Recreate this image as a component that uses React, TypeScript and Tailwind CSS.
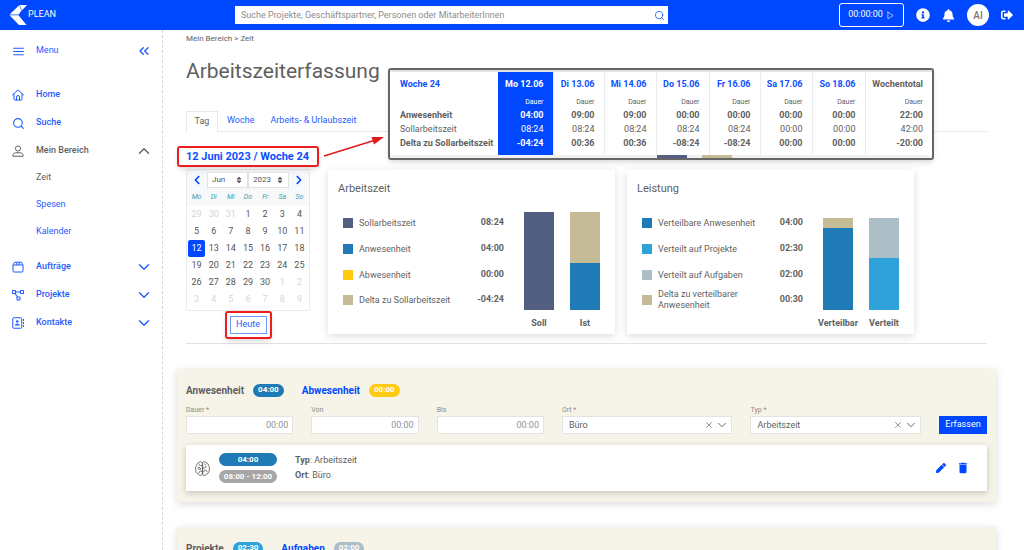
import React, { useState } from 'react'
import { FaBell, FaChevronLeft, FaChevronRight, FaInfoCircle, FaPen, FaSignOutAlt, FaSort } from 'react-icons/fa'
import { MdDelete } from 'react-icons/md'
import { FiChevronDown, FiChevronUp, FiChevronsLeft, FiMenu, FiPlay, FiSearch, FiX } from 'react-icons/fi'

type LegendItem = {
  label: string,
  value: string,
  color: string,
}

type Bar = {
  label: string,
  height: string,
  parts: { color: string, share: number }[],
}

const week = [
  { day: 'Mo 12.06', ist: '04:00', soll: '08:24', delta: '-04:24' },
  { day: 'Di 13.06', ist: '09:00', soll: '08:24', delta: '00:36' },
  { day: 'Mi 14.06', ist: '09:00', soll: '08:24', delta: '00:36' },
  { day: 'Do 15.06', ist: '00:00', soll: '08:24', delta: '-08:24' },
  { day: 'Fr 16.06', ist: '00:00', soll: '08:24', delta: '-08:24' },
  { day: 'Sa 17.06', ist: '00:00', soll: '00:00', delta: '00:00' },
  { day: 'So 18.06', ist: '00:00', soll: '00:00', delta: '00:00' },
  { day: 'Wochentotal', ist: '22:00', soll: '42:00', delta: '-20:00' },
]

const arbeitszeit: LegendItem[] = [
  { label: 'Sollarbeitszeit', value: '08:24', color: 'bg-[#535f80]' },
  { label: 'Anwesenheit', value: '04:00', color: 'bg-[#207ab5]' },
  { label: 'Abwesenheit', value: '00:00', color: 'bg-[#ffca10]' },
  { label: 'Delta zu Sollarbeitszeit', value: '-04:24', color: 'bg-[#c6bb97]' },
]

const arbeitszeitBars: Bar[] = [
  { label: 'Soll', height: 'h-[98px]', parts: [{ color: 'bg-[#535f80]', share: 100 }] },
  { label: 'Ist', height: 'h-[98px]', parts: [{ color: 'bg-[#c6bb97]', share: 52 }, { color: 'bg-[#207ab5]', share: 48 }] },
]

const leistung: LegendItem[] = [
  { label: 'Verteilbare Anwesenheit', value: '04:00', color: 'bg-[#207ab5]' },
  { label: 'Verteilt auf Projekte', value: '02:30', color: 'bg-[#2fa2d9]' },
  { label: 'Verteilt auf Aufgaben', value: '02:00', color: 'bg-[#acbec6]' },
  { label: 'Delta zu verteilbarer Anwesenheit', value: '00:30', color: 'bg-[#c6bb97]' },
]

const leistungBars: Bar[] = [
  { label: 'Verteilbar', height: 'h-[92px]', parts: [{ color: 'bg-[#c6bb97]', share: 11 }, { color: 'bg-[#207ab5]', share: 89 }] },
  { label: 'Verteilt', height: 'h-[92px]', parts: [{ color: 'bg-[#acbec6]', share: 44 }, { color: 'bg-[#2fa2d9]', share: 56 }] },
]

// 29 May to 9 July
const days = Array.from({ length: 42 }, (_, i) => {
  if (i < 3) return { day: 29 + i, outside: true }
  if (i < 33) return { day: i - 2, outside: false }
  return { day: i - 32, outside: true }
})

function Logo() {
  return (
    <svg viewBox="0 0 19 20" className="h-5 w-[19px]" fill="#fff">
      <path d="M10.5 0 H18 L11 7.5 L10 9.5 H0.5 Z" />
      <path d="M10.5 0 L13 6" stroke="#0048ff" strokeWidth="0.6" />
      <path d="M0.5 10.3 H9.5 L17.5 20 H10 Z" />
    </svg>
  )
}

function HomeIcon() {
  return (
    <svg viewBox="0 0 24 24" className="h-3 w-3" fill="none" stroke="currentColor" strokeWidth="2" strokeLinejoin="round" strokeLinecap="round">
      <path d="M1 12 L10.3 3.2 a2.5 2.5 0 0 1 3.4 0 L23 12" />
      <path d="M4 10 V20 a2 2 0 0 0 2 2 H18 a2 2 0 0 0 2 -2 V10" />
      <path d="M9 22 V16 a3 3 0 0 1 6 0 V22" />
    </svg>
  )
}

function PersonIcon() {
  return (
    <svg viewBox="0 0 24 24" className="h-3 w-3" fill="none" stroke="currentColor" strokeWidth="2" strokeLinejoin="round">
      <circle cx="12" cy="7" r="5.2" />
      <path d="M2 22.5 V20 C2 17.5 4 16 7 15.5 H17 C20 16 22 17.5 22 20 V22.5 Z" />
    </svg>
  )
}

function BoxIcon() {
  return (
    <svg viewBox="0 0 24 24" className="h-3 w-3" fill="none" stroke="currentColor" strokeWidth="2" strokeLinejoin="round">
      <path d="M2 8 L5 2.5 H19 L22 8 V20 a2 2 0 0 1 -2 2 H4 a2 2 0 0 1 -2 -2 Z M2 8 H22 M9.5 2.5 V8 M14.5 2.5 V8" />
    </svg>
  )
}

function FlowIcon() {
  return (
    <svg viewBox="0 0 24 24" className="h-3 w-3" fill="none" stroke="currentColor" strokeWidth="2.2" strokeLinejoin="round">
      <rect x="1" y="3" width="6" height="6" rx="1" />
      <rect x="17" y="3" width="6" height="6" rx="1" />
      <rect x="10" y="16" width="6" height="6" rx="1" />
      <path d="M7 6 H17 M6 9 L11 16" />
    </svg>
  )
}

function ContactIcon() {
  return (
    <svg viewBox="0 0 24 24" className="h-3 w-3" fill="none" stroke="currentColor" strokeWidth="2">
      <rect x="1.5" y="1.5" width="18" height="21" rx="2" />
      <circle cx="10.5" cy="9" r="2.6" fill="currentColor" stroke="none" />
      <path d="M5.5 17 C5.5 12 15.5 12 15.5 17 Z" fill="currentColor" stroke="none" />
      <path d="M23 4 V8 M23 10 V14 M23 16 V20" />
    </svg>
  )
}

function BrainIcon() {
  return (
    <svg viewBox="0 0 30 30" className="h-[15px] w-[15px]" fill="none" stroke="currentColor" strokeWidth="1.8" strokeLinecap="round" strokeLinejoin="round">
      <path d="M15 4 C13.5 0 8 0.5 7.5 4 C4 4 2.5 7 3.5 9.5 C0.5 11.5 0 16 2 18 C0.5 21.5 3 25 6 25 C7 29.5 13 30 15 26.5 Z" />
      <path d="M15 4 C16.5 0 22 0.5 22.5 4 C26 4 27.5 7 26.5 9.5 C29.5 11.5 30 16 28 18 C29.5 21.5 27 25 24 25 C23 29.5 17 30 15 26.5 Z" />
      <path d="M15 9 H11 C9.5 9 8.5 8 8.5 6.5 M7 13 C9.5 12 11.5 13.5 11 16 M11 16 C9 17.5 6.5 17 5.5 15.5 M15 20.5 H11 C9 20.5 8 22 8.5 23.5" />
      <path d="M15 14 H19 C21 14 22 12.5 21.5 10.5 M19.5 6 L21 8 M15 22 C18 22 19 20.5 19 18.5 C21 18 23.5 18.5 24 21" />
    </svg>
  )
}

function Header() {
  return (
    <header className="flex h-[30px] shrink-0 items-center bg-[#0048ff] pr-[11px] pl-[9px] text-white">
      <a href="#" className="flex w-[226px] items-center text-[9px]">
        <Logo />
        PLEAN
      </a>

      <form className="flex h-[18px] w-[433px] items-center bg-white pr-[3px]">
        <input
          type="text"
          aria-label="Suche"
          placeholder="Suche Projekte, Geschäftspartner, Personen oder MitarbeiterInnen"
          className="h-full min-w-0 flex-1 px-[6px] text-[9px] text-[#555] outline-none placeholder:text-[#8d8d8d]"
        />
        <button type="button" aria-label="Suchen" className="text-[#0048ff]">
          <FiSearch className="h-[11px] w-[11px]" strokeWidth={1.6} />
        </button>
      </form>

      <div className="ml-auto flex items-center">
        <button className="mr-3 flex h-6 w-[65px] items-center justify-center gap-[3px] rounded-[3px] border border-white text-[9px]">
          00:00:00
          <FiPlay className="h-[9px] w-[9px]" strokeWidth={1.6} />
        </button>
        <button aria-label="Info" className="mr-3"><FaInfoCircle className="h-[14px] w-[14px]" /></button>
        <button aria-label="Benachrichtigungen" className="mr-3"><FaBell className="h-[13px] w-[13px]" /></button>
        <button className="mr-3 h-[22px] w-[22px] rounded-full bg-white text-[10px] font-medium text-[#777]">AI</button>
        <button aria-label="Abmelden"><FaSignOutAlt className="h-3 w-3" /></button>
      </div>
    </header>
  )
}

function NavItem({ icon, label, chevron, active }: { icon: React.ReactNode, label: string, chevron?: 'up' | 'down', active?: boolean }) {
  return (
    <a href="#" className={`flex h-7 items-center font-medium ${active ? 'text-[#5f5f5f]' : 'text-[#1f5bff]'}`}>
      <span className="w-6">{icon}</span>
      {label}
      {chevron === 'up' && <FiChevronUp className="ml-auto h-[18px] w-[18px]" strokeWidth={1.8} />}
      {chevron === 'down' && <FiChevronDown className="ml-auto h-[18px] w-[18px]" strokeWidth={1.8} />}
    </a>
  )
}

function Sidebar() {
  return (
    <nav className="w-[163px] shrink-0 border-r border-dashed border-[#d8d8d8] pr-[9px] pl-3 text-[9px] text-[#1f5bff]">
      <button className="mt-[7px] flex h-7 w-full items-center">
        <span className="w-6"><FiMenu className="h-[13px] w-[13px]" /></span>
        Menu
        <FiChevronsLeft className="ml-auto h-4 w-[18px]" />
      </button>

      <div className="mt-4">
        <NavItem icon={<HomeIcon />} label="Home" />
        <NavItem icon={<FiSearch className="h-[13px] w-[13px]" />} label="Suche" />
        <NavItem icon={<PersonIcon />} label="Mein Bereich" chevron="up" active />
      </div>

      <ul className="pl-6">
        <li><a href="#" className="flex h-[26px] items-center text-[#5f5f5f]">Zeit</a></li>
        <li><a href="#" className="flex h-[27px] items-center">Spesen</a></li>
        <li><a href="#" className="flex h-[27px] items-center">Kalender</a></li>
      </ul>

      <div className="mt-2">
        <NavItem icon={<BoxIcon />} label="Aufträge" chevron="down" />
        <NavItem icon={<FlowIcon />} label="Projekte" chevron="down" />
        <NavItem icon={<ContactIcon />} label="Kontakte" chevron="down" />
      </div>
    </nav>
  )
}

function WeekTable() {
  return (
    <div className="absolute top-[38px] left-[225px] h-[92px] w-[546px] overflow-hidden rounded-[3px] border-2 border-[#666] bg-white shadow-md">
      <div className="h-[2px] bg-[#e2e2e2]" />
      <table className="w-full table-fixed text-right text-[9px] text-[#5f5f5f]">
        <colgroup>
          <col className="w-[108px]" />
          <col className="w-[55px]" />
          <col className="w-[51px]" />
          <col className="w-[52px]" />
          <col className="w-[53px]" />
          <col className="w-[51px]" />
          <col className="w-[52px]" />
          <col className="w-[53px]" />
          <col />
        </colgroup>
        <thead>
          <tr className="h-[25px] text-[#0a4fff]">
            <th scope="col" className="pl-[10px] text-left font-bold">Woche 24</th>
            {week.map((d, i) => (
              <th key={i} scope="col" className={`pr-[9px] font-bold whitespace-nowrap ${i === 0 ? 'bg-[#0048ff] text-white' : 'border-l border-[#ececec]'} ${i === 7 ? 'text-[#5f5f5f]' : ''}`}>{d.day}</th>
            ))}
          </tr>
        </thead>
        <tbody>
          <tr className="h-[11px] text-[7px] leading-[11px]">
            <td></td>
            {week.map((_, i) => (
              <td key={i} className={`pr-[9px] ${i === 0 ? 'bg-[#0048ff] text-white' : 'border-l border-[#ececec]'}`}>Dauer</td>
            ))}
          </tr>
          <tr className="h-[14px] leading-[14px] font-bold">
            <th scope="row" className="pl-[10px] text-left">Anwesenheit</th>
            {week.map((d, i) => (
              <td key={i} className={`pr-[9px] ${i === 0 ? 'bg-[#0048ff] text-white' : 'border-l border-[#ececec]'}`}>{d.ist}</td>
            ))}
          </tr>
          <tr className="h-[14px] leading-[14px]">
            <th scope="row" className="pl-[10px] text-left font-normal">Sollarbeitszeit</th>
            {week.map((d, i) => (
              <td key={i} className={`pr-[9px] ${i === 0 ? 'bg-[#0048ff] text-white' : 'border-l border-[#ececec]'}`}>{d.soll}</td>
            ))}
          </tr>
          <tr className="h-[19px] align-top leading-[14px] font-bold">
            <th scope="row" className="pl-[10px] text-left whitespace-nowrap">Delta zu Sollarbeitszeit</th>
            {week.map((d, i) => (
              <td key={i} className={`pr-[9px] ${i === 0 ? 'bg-[#0048ff] text-white' : 'border-l border-[#ececec]'}`}>{d.delta}</td>
            ))}
          </tr>
        </tbody>
      </table>
      <div className="flex h-[3px] gap-[15px] bg-[#f1f1f1] pl-[267px]">
        <div className="w-[30px] bg-[#535f80]" />
        <div className="w-[30px] bg-[#c6bb97]" />
      </div>
    </div>
  )
}

function CalendarSelect({ label, value }: { label: string, value: string }) {
  return (
    <div className="relative flex h-4 w-[41px] items-center border border-[#e0e2e5] bg-white">
      <select aria-label={label} className="block h-3 w-full appearance-none pl-1 text-[8px] leading-[12px] outline-none">
        <option className="min-h-0 p-0">{value}</option>
      </select>
      <FaSort className="pointer-events-none absolute top-[3px] right-[4px] h-2 w-2" />
    </div>
  )
}

function Calendar() {
  const [selected, setSelected] = useState(12)

  return (
    <div className="w-[124px] rounded-[2px] border border-[#e8eaec] text-[#555]">
      <div className="bg-[#f7f8fa] pt-[2px]">
        <div className="flex h-4 items-center justify-between px-[5px]">
          <button aria-label="Vorheriger Monat" className="text-[#0048ff]"><FaChevronLeft className="h-[10px] w-[10px]" /></button>
          <div className="flex h-4">
            <CalendarSelect label="Monat" value="Jun" />
            <CalendarSelect label="Jahr" value="2023" />
          </div>
          <button aria-label="Nächster Monat" className="text-[#0048ff]"><FaChevronRight className="h-[10px] w-[10px]" /></button>
        </div>
        <div className="grid h-[18px] grid-cols-7 items-center px-[1px] text-center text-[7px] text-[#3aa3b5] italic">
          {['Mo', 'Di', 'Mi', 'Do', 'Fr', 'Sa', 'So'].map((d) => <span key={d}>{d}</span>)}
        </div>
      </div>
      <div className="grid grid-cols-7 px-[1px] pb-[2px]">
        {days.map(({ day, outside }, i) => (
          <button
            key={i}
            onClick={() => !outside && setSelected(day)}
            className={`h-[17px] rounded-[2px] text-[9px] ${outside ? 'text-[#d5d5d5]' : day === selected ? 'bg-[#0048ff] text-white' : ''}`}
          >
            {day}
          </button>
        ))}
      </div>
    </div>
  )
}

function ChartCard({ title, legend, bars }: { title: string, legend: LegendItem[], bars: Bar[] }) {
  return (
    <section className="h-[164px] w-[287px] bg-white pt-3 pr-[7px] pl-[10px] shadow-[0_2px_8px_rgba(0,0,0,0.14)]">
      <h2 className="text-[11px] leading-[14px] text-[#5f5f5f]">{title}</h2>
      <div className="flex">
        <ul className="mt-[14px] flex-1 pl-[5px] text-[9px] text-[#5f5f5f]">
          {legend.map((item) => (
            <li key={item.label} className="flex h-[26px] items-center gap-[6px] last:h-6">
              <span className={`h-[10px] w-[10px] shrink-0 ${item.color}`} />
              <span className="max-w-[104px] leading-[11px]">{item.label}</span>
              <span className="ml-auto font-bold">{item.value}</span>
            </li>
          ))}
        </ul>
        <div className="ml-3 flex h-[133px] items-end">
          {bars.map((bar) => (
            <div key={bar.label} className="flex w-[46px] flex-col items-center">
              <div className={`flex w-[30px] flex-col ${bar.height}`}>
                {bar.parts.map((part, i) => (
                  <div key={i} className={part.color} style={{ height: `${part.share}%` }} />
                ))}
              </div>
              <span className="mt-[7px] text-[9px] leading-[12px] font-bold text-[#5f5f5f]">{bar.label}</span>
            </div>
          ))}
        </div>
      </div>
    </section>
  )
}

function Badge({ color, children }: { color: string, children: React.ReactNode }) {
  return (
    <span className={`flex h-[13px] items-center justify-center rounded-full px-[5px] text-[8px] font-bold whitespace-nowrap text-white ${color}`}>{children}</span>
  )
}

function TimeField({ id, label }: { id: string, label: string }) {
  return (
    <div>
      <label htmlFor={id} className="block text-[7px] leading-[12px] text-[#8b8b85]">{label}</label>
      <input id={id} type="text" placeholder="00:00" className="block h-[18px] w-full border border-[#e4e4e0] bg-white px-1 text-right text-[9px] outline-none placeholder:text-[#8d9499]" />
    </div>
  )
}

function SelectField({ id, label, value }: { id: string, label: string, value: string }) {
  return (
    <div>
      <label htmlFor={id} className="block text-[7px] leading-[12px] text-[#8b8b85]">{label}</label>
      <div className="relative h-[18px] border border-[#e4e4e0] bg-white">
        <select id={id} className="block h-full w-full appearance-none pl-[6px] text-[9px] leading-[16px] text-[#5f5f5f] outline-none">
          <option>{value}</option>
        </select>
        <button aria-label="Leeren" className="absolute top-[3px] right-[17px]"><FiX className="h-[10px] w-[10px]" strokeWidth={1.6} /></button>
        <FiChevronDown className="pointer-events-none absolute top-[1px] right-[2px] h-[14px] w-[14px]" strokeWidth={1.6} />
      </div>
    </div>
  )
}

export default function App() {
  return (
    <div className="flex h-screen flex-col overflow-hidden bg-white font-[Roboto,sans-serif] text-[#5f5f5f]">

      <Header />

      <div className="flex min-h-0 flex-1">

        <Sidebar />

        <main className="relative min-w-0 flex-1 pr-7 pl-[14px]">

          <div className="px-[9px]">
            <p className="pt-[3px] text-[8px] leading-[12px]">
              <a href="#">Mein Bereich</a> &gt; <a href="#">Zeit</a>
            </p>
            <h1 className="mt-[11px] text-[21px] leading-[30px]">Arbeitszeiterfassung</h1>

            <div className="mt-[25px] flex h-[21px] border-b border-[#e8e8e8] text-[9px] text-[#1f5bff]">
              <button className="-mb-px w-8 border border-b-0 border-[#e8e8e8] bg-white text-[#5f5f5f]">Tag</button>
              <button className="ml-[9px]">Woche</button>
              <button className="ml-4">Arbeits- &amp; Urlaubszeit</button>
            </div>

            <div className="flex gap-[18px] border-b border-[#e2e2e2] pb-[9px]">
              <div className="w-[124px] shrink-0 pt-[17px]">
                <div className="relative">
                  <h2 className="text-[11px] leading-[15px] font-bold whitespace-nowrap text-[#0a4fff]">12 Juni 2023 / Woche 24</h2>
                  <div className="absolute -inset-x-[9px] -inset-y-[3px] rounded-[3px] border-2 border-[#ee1c1c] shadow-md" />
                  <svg viewBox="0 0 62 24" className="absolute -top-[14px] left-[137px] h-6 w-[62px]">
                    <path d="M1 21 L51 5.5" stroke="#e01b1b" strokeWidth="1.4" />
                    <path d="M61 2 L51 9.5 L48.5 2 Z" fill="#e01b1b" />
                  </svg>
                </div>
                <div className="mt-[5px]">
                  <Calendar />
                </div>
                <div className="mt-[5px] flex justify-center">
                  <div className="relative">
                    <button className="block h-[18px] w-[37px] border border-[#6f97ff] text-[9px] text-[#1f5bff]">Heute</button>
                    <div className="pointer-events-none absolute -inset-[5px] rounded-[3px] border-2 border-[#ee1c1c] shadow-md" />
                  </div>
                </div>
              </div>

              <div className="flex gap-3 pt-[38px]">
                <ChartCard title="Arbeitszeit" legend={arbeitszeit} bars={arbeitszeitBars} />
                <ChartCard title="Leistung" legend={leistung} bars={leistungBars} />
              </div>
            </div>
          </div>

          <section className="mt-[25px] bg-[#f6f3e8] px-[9px] pt-[14px] pb-[11px] shadow-[0_2px_8px_rgba(0,0,0,0.14)]">
            <div className="flex h-[14px] items-center text-[10px] font-bold">
              <button className="mr-[9px]">Anwesenheit</button>
              <Badge color="bg-[#207ab5]">04:00</Badge>
              <button className="mr-[9px] ml-[18px] text-[#0048ff]">Abwesenheit</button>
              <Badge color="bg-[#ffca10]">00:00</Badge>
            </div>

            <form className="mt-[7px] grid grid-cols-[107fr_107fr_107fr_170fr_170fr_48px] items-end gap-[18px]">
              <TimeField id="dauer" label="Dauer *" />
              <TimeField id="von" label="Von" />
              <TimeField id="bis" label="Bis" />
              <SelectField id="ort" label="Ort *" value="Büro" />
              <SelectField id="typ" label="Typ *" value="Arbeitszeit" />
              <button type="button" className="h-[18px] bg-[#0048ff] text-[9px] text-white">Erfassen</button>
            </form>

            <div className="mt-[11px] flex h-[46px] items-center bg-white pr-[17px] pl-[9px] text-[9px] shadow-[0_2px_6px_rgba(0,0,0,0.2)]">
              <BrainIcon />
              <div className="ml-[9px] flex w-[58px] flex-col gap-1">
                <Badge color="bg-[#207ab5]">04:00</Badge>
                <Badge color="bg-[#a6a6a6]">08:00 - 12:00</Badge>
              </div>
              <div className="ml-[18px] leading-[15px]">
                <p><b>Typ</b>: Arbeitszeit</p>
                <p><b>Ort</b>: Büro</p>
              </div>
              <div className="ml-auto flex items-center gap-[10px] text-[#0048ff]">
                <button aria-label="Bearbeiten"><FaPen className="h-[10px] w-[10px]" /></button>
                <button aria-label="Löschen"><MdDelete className="h-[14px] w-[14px]" /></button>
              </div>
            </div>
          </section>

          <section className="mt-[25px] bg-[#f6f3e8] px-[9px] pt-[14px] pb-6 shadow-[0_2px_8px_rgba(0,0,0,0.14)]">
            <div className="flex h-[14px] items-center text-[10px] font-bold">
              <button className="mr-[9px]">Projekte</button>
              <Badge color="bg-[#2fa2d9]">02:30</Badge>
              <button className="mr-[9px] ml-[18px] text-[#0048ff]">Aufgaben</button>
              <Badge color="bg-[#acbec6]">02:00</Badge>
            </div>
          </section>

          <WeekTable />

        </main>
      </div>
    </div>
  )
}
